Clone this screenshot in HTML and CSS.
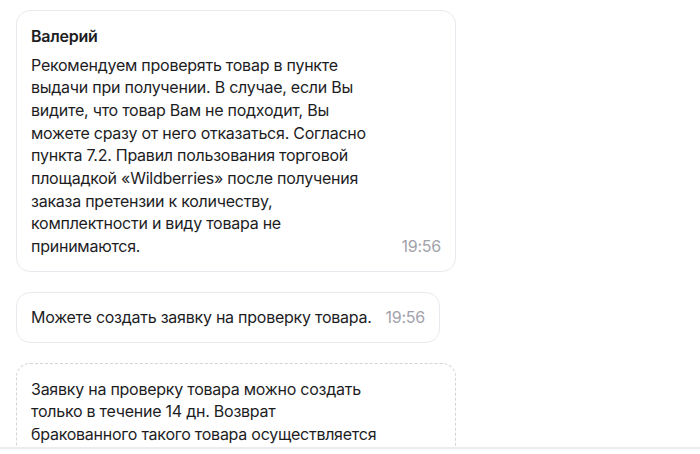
FILE: index.html
```html
<!DOCTYPE html>
<html lang="ru">
<head>
<meta charset="utf-8">
<title>Чат</title>
<link rel="stylesheet" href="styles.css">
</head>
<body>
<div class="page">
  <div class="chat">
    <div class="bubble bubble-wide">
      <div class="author">Валерий</div>
      <div class="row">
        <p class="text">Рекомендуем проверять товар в пункте<br>выдачи при получении. В случае, если Вы<br>видите, что товар Вам не подходит, Вы<br>можете сразу от него отказаться. Согласно<br>пункта 7.2. Правил пользования торговой<br>площадкой «Wildberries» после получения<br>заказа претензии к количеству,<br>комплектности и виду товара не<br>принимаются.</p>
        <span class="time">19:56</span>
      </div>
    </div>
    <div class="bubble bubble-fit">
      <div class="row">
        <p class="text">Можете создать заявку на проверку товара.</p>
        <span class="time">19:56</span>
      </div>
    </div>
    <div class="bubble bubble-wide bubble-dashed">
      <p class="text">Заявку на проверку товара можно создать<br>только в течение 14 дн. Возврат<br>бракованного такого товара осуществляется</p>
    </div>
  </div>
  <div class="footer"></div>
</div>
</body>
</html>
```
FILE: styles.css
```css
html, body {
  margin: 0;
  padding: 0;
  background: #ffffff;
}
body {
  font-family: Inter, "Noto Sans", "Liberation Sans", sans-serif;
  font-size: 16px;
  letter-spacing: -0.25px;
  color: #1d1d1f;
}
.page {
  height: 100vh;
  display: flex;
  flex-direction: column;
}
.chat {
  flex: 1;
  overflow: hidden;
  padding: 10px 16px 0;
  display: flex;
  flex-direction: column;
  align-items: flex-start;
  gap: 20px;
}
.bubble {
  box-sizing: border-box;
  border: 1px solid #e9e9ef;
  border-radius: 14px;
  padding: 14px 14px 13px;
  background: #ffffff;
  flex-shrink: 0;
}
.bubble-wide {
  width: 440px;
}
.bubble-fit {
  width: auto;
  padding-top: 13px;
}
.bubble-dashed {
  border: 1px dashed #d4d4da;
  padding-top: 14px;
}
.author {
  font-weight: 600;
  line-height: 22.5px;
  margin-bottom: 6px;
}
.row {
  display: flex;
  align-items: flex-end;
  justify-content: space-between;
  gap: 14px;
}
.text {
  margin: 0;
  line-height: 22.7px;
  white-space: nowrap;
}
.time {
  color: #a2a2aa;
  line-height: 22.7px;
  flex-shrink: 0;
}
.footer {
  height: 5px;
  border-top: 2px solid #ebebf0;
  flex-shrink: 0;
}
```
